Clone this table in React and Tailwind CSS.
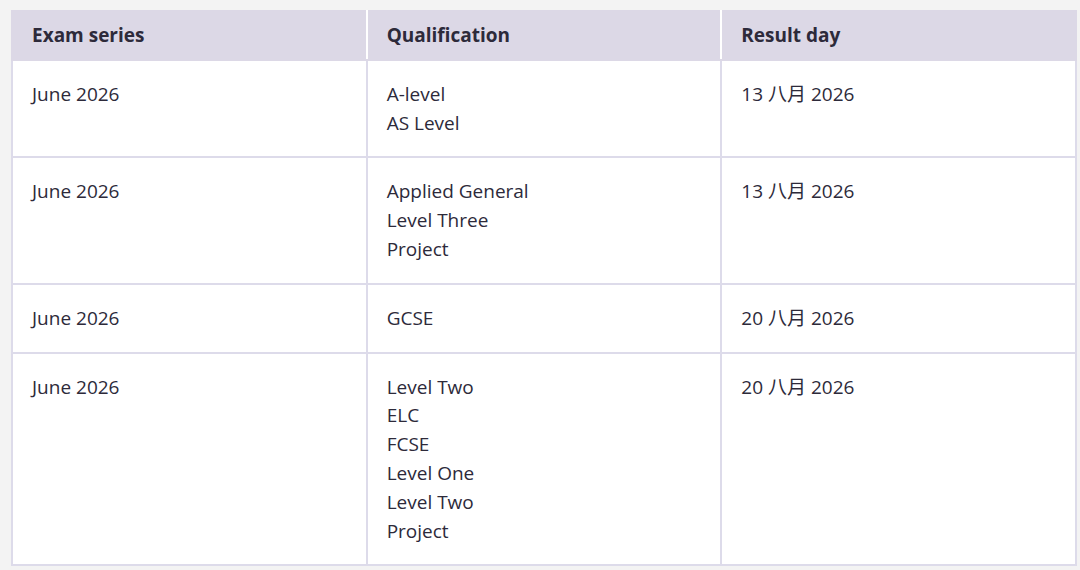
const rows = [
  { series: "June 2026", quals: ["A-level", "AS Level"], day: "13 八月 2026" },
  { series: "June 2026", quals: ["Applied General", "Level Three", "Project"], day: "13 八月 2026" },
  { series: "June 2026", quals: ["GCSE"], day: "20 八月 2026" },
  {
    series: "June 2026",
    quals: ["Level Two", "ELC", "FCSE", "Level One", "Level Two", "Project"],
    day: "20 八月 2026",
  },
];

const cell = "border-2 border-[#dddbea] align-top px-[19px] py-[19px]";
const head = "border-2 border-[#dcd8e6] text-left font-bold px-[19px] py-[9px]";

export default function App() {
  return (
    <div
      className="min-h-[570px] bg-[#f3f3f3] pl-[11px] pr-[3px] pt-[10px] text-[#2d2a3a]"
      style={{ fontFamily: '"Open Sans", "Noto Sans CJK SC", sans-serif' }}
    >
      <table className="w-[1066px] border-collapse table-fixed bg-white text-[19px] leading-[28.8px]">
        <thead>
          <tr className="bg-[#dcd8e6]">
            <th className={`${head} border-r-white`}>Exam series</th>
            <th className={`${head} border-r-white`}>Qualification</th>
            <th className={head}>Result day</th>
          </tr>
        </thead>
        <tbody>
          {rows.map((r, i) => (
            <tr key={i}>
              <td className={cell}>{r.series}</td>
              <td className={cell}>
                {r.quals.map((q, j) => (
                  <div key={j}>{q}</div>
                ))}
              </td>
              <td className={cell}>{r.day}</td>
            </tr>
          ))}
        </tbody>
      </table>
    </div>
  );
}
